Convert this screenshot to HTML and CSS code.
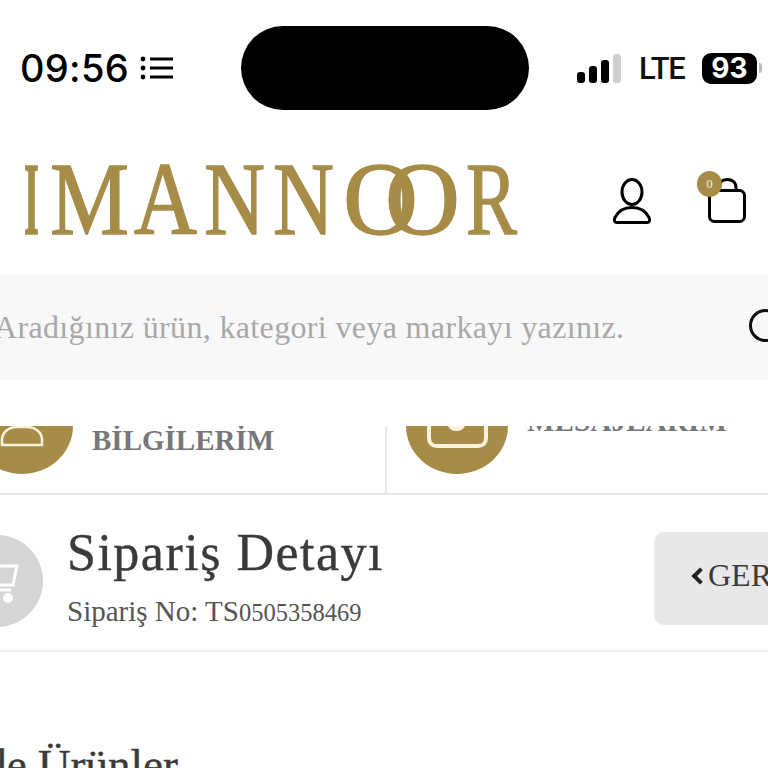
FILE: index.html
```html
<!DOCTYPE html>
<html lang="tr">
  <head>
    <meta charset="utf-8">
    <title>Sipariş Detayı</title>
    <link rel="stylesheet" href="styles.css">
  </head>
  <body>
    <div class="status-bar">
      <div class="status-left">
        <span class="clock">09:56</span>
        <svg class="list-icon" width="33" height="26" viewBox="0 0 33 26">
          <circle cx="3" cy="4" r="2.4"/><circle cx="3" cy="13" r="2.400"/><circle cx="3" cy="22" r="2.4"/>
          <path d="M10 4H33M10 13H33M10 22H33" stroke="#000" stroke-width="3"/>
        </svg>
      </div>
      <div class="island"></div>
      <div class="status-right">
        <svg width="46" height="30" viewBox="0 0 46 30">
          <rect x="1" y="19" width="8" height="11" rx="3"/>
          <rect x="13" y="13" width="8" height="17" rx="3"/>
          <rect x="25" y="7" width="8" height="23" rx="3"/>
          <rect x="37" y="1" width="8" height="29" rx="3" fill="#cfcfcf"/>
        </svg>
        <span class="lte">LTE</span>
        <span class="battery">93</span>
        <span class="battery-tip"></span>
      </div>
    </div>

    <header class="site-header">
      <svg class="logo" width="530" height="137" viewBox="0 0 530 137">
        <text y="96"><tspan class="logo-i" x="24" textLength="15" lengthAdjust="spacingAndGlyphs">I</tspan><tspan x="50" textLength="79" lengthAdjust="spacingAndGlyphs">M</tspan><tspan x="134" textLength="63" lengthAdjust="spacingAndGlyphs">A</tspan><tspan x="204" textLength="61" lengthAdjust="spacingAndGlyphs">N</tspan><tspan x="273" textLength="61" lengthAdjust="spacingAndGlyphs">N</tspan><tspan x="343" textLength="75" lengthAdjust="spacingAndGlyphs">O</tspan><tspan x="385" textLength="75" lengthAdjust="spacingAndGlyphs">O</tspan><tspan x="466" textLength="51" lengthAdjust="spacingAndGlyphs">R</tspan></text>
      </svg>
      <div class="header-icons">
        <svg width="38" height="46" viewBox="0 0 38 46" fill="none" stroke="#000" stroke-width="3">
          <ellipse cx="19" cy="14" rx="10" ry="12.500"/>
          <path d="M4 44.500c-3 0-3-3-2-5 3-6 9-10 17-10s14 4 17 10c1 2 1 5-2 5z"/>
        </svg>
        <div class="cart">
          <svg width="38" height="45" viewBox="0 0 38 45" fill="none" stroke="#000" stroke-width="3">
            <path d="M11 12V10C11 4 14 1.500 19 1.500S28 4 28 10V12"/>
            <rect x="1.500" y="12.500" width="35" height="31" rx="5"/>
          </svg>
          <span class="cart-count">0</span>
        </div>
      </div>
    </header>

    <div class="search">
      <span class="search-text">Aradığınız ürün, kategori veya markayı yazınız.</span>
      <span class="search-icon"></span>
    </div>

    <nav class="account-nav">
      <div class="nav-cell nav-left">
        <svg class="nav-circle" width="102" height="48" viewBox="0 0 102 48">
          <path d="M0 0H102A51 48 0 0 1 0 0Z" fill="#a68c47"/>
          <path d="M31 19V14C31 6 38 1 46 1H56C64 1 71 6 71 14V19Z" fill="none" stroke="#fbf3dc" stroke-width="2.500"/>
        </svg>
        <span class="nav-label">BİLGİLERİM</span>
      </div>
      <div class="nav-cell nav-right">
        <svg class="nav-circle" width="102" height="48" viewBox="0 0 102 48">
          <path d="M0 0H102A51 48 0 0 1 0 0Z" fill="#a68c47"/>
          <path d="M23 0V12C23 17 26 20 31 20H72C77 20 80 17 80 12V0" fill="none" stroke="#fbf3dc" stroke-width="4"/>
          <path d="M42 0C44 4 47 5 50.500 5S57 4 59 0Z" fill="#fbf3dc"/>
        </svg>
        <span class="nav-label nav-label-cut">MESAJLARIM</span>
      </div>
    </nav>

    <section class="order-head">
      <div class="order-icon">
        <svg width="92" height="92" viewBox="0 0 92 92">
          <circle cx="46" cy="46" r="46" fill="#d5d5d5"/>
          <path d="M20 31H66L62 50H26" fill="none" stroke="#fff" stroke-width="3"/>
          <path d="M26 55H60" stroke="#fff" stroke-width="3"/>
          <circle cx="57" cy="63" r="5" fill="#fff"/>
        </svg>
      </div>
      <div class="order-title">
        <h1>Sipariş Detayı</h1>
        <p>Sipariş No: TS<span class="order-digits">0505358469</span></p>
      </div>
      <a class="back-btn"><span class="chevron"></span>GERİ</a>
    </section>

    <h2 class="products-title"><span>Siparişinizde Ürünler</span></h2>
  </body>
</html>
```

FILE: styles.css
```css
html, body {
  margin: 0;
  height: 768px;
  overflow: hidden;
}
body {
  width: 768px;
  background-color: #fff;
  font-family: "Liberation Serif", serif;
  color: #3a3a3a;
}

/* phone status bar */
.status-bar {
  display: flex;
  align-items: center;
  height: 84px;
  padding: 26px 0 28px 20px;
}
.status-left {
  display: flex;
  flex: none;
  align-items: center;
  gap: 11px;
  width: 221px;
}
.clock {
  font-family: Inter, sans-serif;
  font-size: 38px;
  font-weight: 500;
  letter-spacing: 0.3px;
  color: #000;
}
.island {
  flex: none;
  width: 288px;
  height: 84px;
  border-radius: 42px;
  background-color: #000;
}
.status-right {
  display: flex;
  flex: none;
  align-items: center;
  margin-left: 47px;
}
.lte {
  width: 45px;
  margin-left: 17px;
  font-family: Roboto, sans-serif;
  font-size: 31px;
  font-weight: 500;
  letter-spacing: -1.3px;
  color: #111;
  white-space: nowrap;
}
.battery {
  flex: none;
  margin-left: 18px;
  width: 55px;
  height: 31px;
  border-radius: 9px;
  background-color: #000;
  color: #fff;
  font-family: Inter, sans-serif;
  font-size: 28px;
  font-weight: 700;
  line-height: 31px;
  text-align: center;
}
.battery-tip {
  width: 3px;
  height: 10px;
  margin-left: 2px;
  border-radius: 0 3px 3px 0;
  background-color: #bbb;
}

/* logo row */
.site-header {
  display: flex;
  align-items: center;
  justify-content: space-between;
  height: 137px;
  padding-right: 22px;
  box-sizing: border-box;
}
.logo {
  flex: none;
  font-size: 103px;
  fill: #a68c47;
  stroke: #a68c47;
  stroke-width: 1.4px;
}
.logo-i {
  font-weight: 700;
}
.header-icons {
  display: flex;
  align-items: center;
  gap: 57px;
  margin-bottom: 12px;
}
.cart {
  position: relative;
  height: 45px;
}
.cart-count {
  position: absolute;
  top: -7px;
  left: -11px;
  width: 25px;
  height: 26px;
  border-radius: 50%;
  background-color: #a68c47;
  color: #eee;
  font-size: 13px;
  line-height: 26px;
  text-align: center;
}

/* search */
.search {
  display: flex;
  align-items: center;
  justify-content: space-between;
  height: 105px;
  margin-bottom: 46px;
  background-color: #f8f8f8;
  overflow: hidden;
}
.search-text {
  margin-left: -6px;
  font-size: 32px;
  letter-spacing: 0.35px;
  color: #a8a8a8;
  white-space: nowrap;
}
.search-icon {
  flex: none;
  width: 27px;
  height: 27px;
  margin-right: -14px;
  margin-bottom: 4px;
  border: 3px solid #111;
  border-radius: 50%;
}

/* account menu, scrolled under the header */
.account-nav {
  display: flex;
  height: 67px;
  border-bottom: 2px solid #e8e8e8;
}
.nav-cell {
  display: flex;
  overflow: hidden;
}
.nav-left {
  width: 387px;
  border-right: 2px solid #e8e8e8;
  box-sizing: border-box;
}
.nav-circle {
  flex: none;
}
.nav-left .nav-circle {
  margin-left: -29px;
}
.nav-right .nav-circle {
  margin-left: 19px;
}
.nav-label {
  margin-left: 19px;
  font-size: 29px;
  font-weight: 700;
  line-height: 28px;
  color: #77777a;
  white-space: nowrap;
}
.nav-label-cut {
  margin-top: -19px;
  letter-spacing: 0.2px;
}

/* order title */
.order-head {
  display: flex;
  align-items: flex-start;
  height: 155px;
  border-bottom: 2px solid #eee;
}
.order-icon {
  flex: none;
  height: 92px;
  margin: 40px 0 0 -49px;
}
.order-title {
  margin: 30px 0 0 24px;
}
.order-title h1 {
  margin: 0;
  font-size: 52px;
  font-weight: 400;
  line-height: 56px;
  letter-spacing: 1.5px;
  -webkit-text-stroke: 0.4px #3a3a3a;
  white-space: nowrap;
}
.order-title p {
  margin: 12px 0 0;
  font-size: 29px;
  line-height: 36px;
  color: #555;
  white-space: nowrap;
}
.order-digits {
  font-size: 24.500px;
}
.back-btn {
  display: flex;
  align-items: center;
  flex: none;
  width: 200px;
  height: 93px;
  margin: 37px -86px 0 auto;
  padding: 0 0 6px 40px;
  box-sizing: border-box;
  border-radius: 10px;
  background-color: #e8e8e8;
  font-size: 32px;
  white-space: nowrap;
}
.chevron {
  width: 12px;
  height: 12px;
  margin-right: 2px;
  box-sizing: border-box;
  border-left: 4px solid #222;
  border-bottom: 4px solid #222;
  transform: rotate(45deg);
}

.products-title {
  display: flex;
  justify-content: flex-end;
  width: 178px;
  margin: 88px 0 0;
  font-size: 45px;
  font-weight: 400;
  line-height: 50px;
  -webkit-text-stroke: 0.4px #3a3a3a;
  white-space: nowrap;
}
```
